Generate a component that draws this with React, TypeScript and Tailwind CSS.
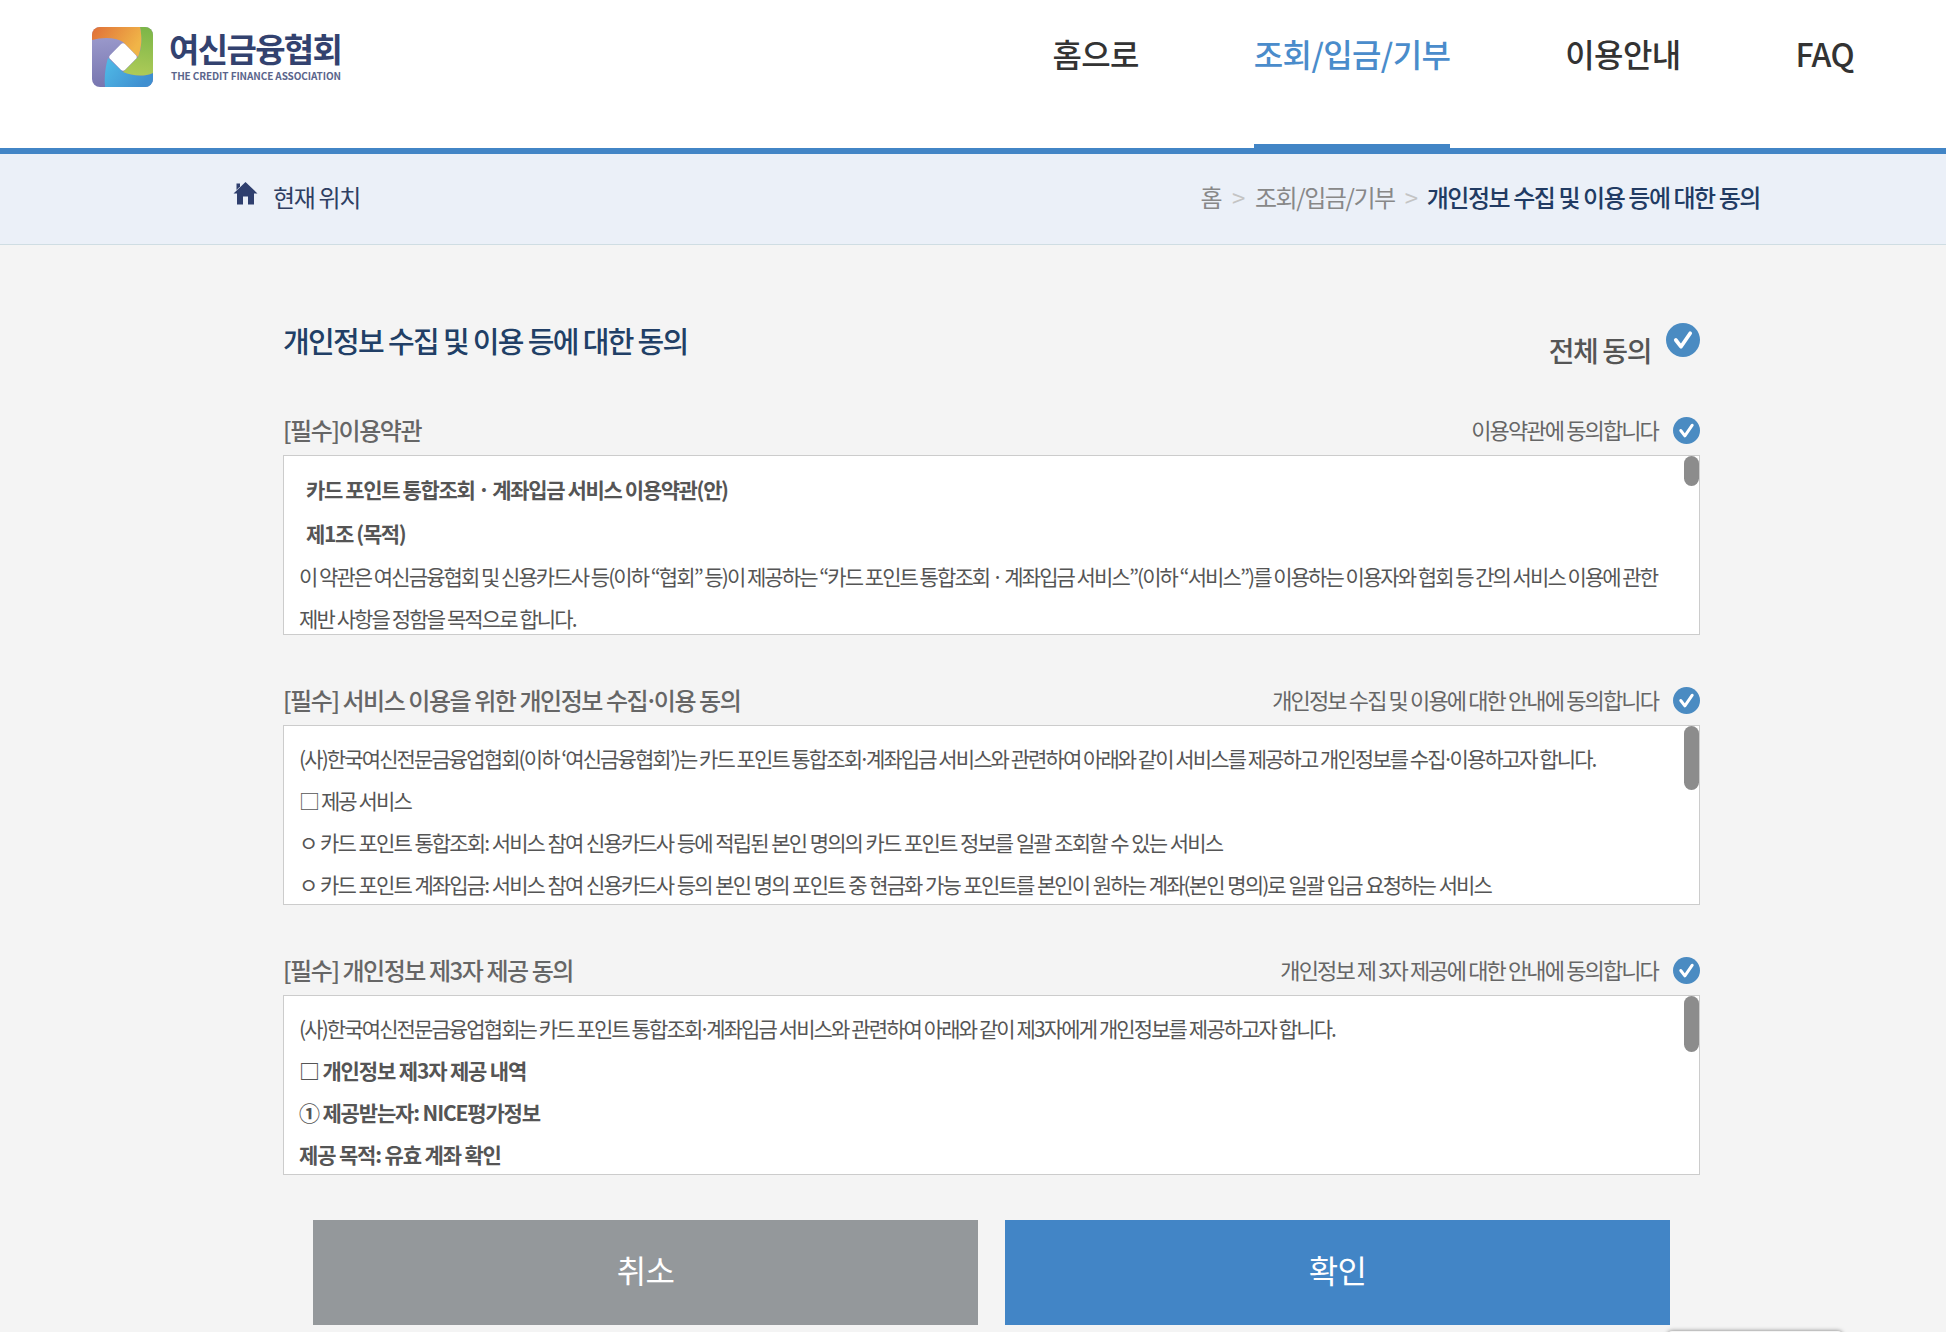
import React from 'react';

const CheckCircle = ({ size, className }: { size: number; className?: string }) => (
  <svg width={size} height={size} viewBox="0 0 33 33" className={'shrink-0 ' + (className ?? '')}>
    <circle cx="16.5" cy="16.5" r="16.5" fill="#4a8bc2" />
    <path d="M9.5 16.5l5 6.5 9-13" fill="none" stroke="#fff" strokeWidth="3.6" strokeLinecap="round" strokeLinejoin="round" />
  </svg>
);

const Logo = () => (
  <svg width="61" height="60" viewBox="0 0 61 60" className="shrink-0">
    <defs>
      <clipPath id="logoClip">
        <rect width="61" height="60" rx="8" />
      </clipPath>
      <linearGradient id="logoOrange" x1="0" y1="0" x2="1" y2="0.4">
        <stop offset="0" stopColor="#e06f38" />
        <stop offset="1" stopColor="#f0b548" />
      </linearGradient>
      <linearGradient id="logoGreen" x1="0.5" y1="0" x2="0.4" y2="1">
        <stop offset="0" stopColor="#7db648" />
        <stop offset="1" stopColor="#aecb58" />
      </linearGradient>
      <linearGradient id="logoBlue" x1="0" y1="0" x2="1" y2="0.5">
        <stop offset="0" stopColor="#50bce8" />
        <stop offset="1" stopColor="#3f8fd0" />
      </linearGradient>
      <linearGradient id="logoPurple" x1="0.4" y1="0" x2="0.5" y2="1">
        <stop offset="0" stopColor="#a09fd0" />
        <stop offset="1" stopColor="#7674ae" />
      </linearGradient>
    </defs>
    <g clipPath="url(#logoClip)">
      <rect width="61" height="60" fill="url(#logoPurple)" />
      <path d="M13 60C12 48 14 38 16 31L31 45C40 49 52 50 61 46V60Z" fill="url(#logoBlue)" />
      <path d="M48 0H61V46C52 50 40 49 31 45L46 30C50 22 50 10 48 0Z" fill="url(#logoGreen)" />
      <path d="M0 13V0H48C50 10 50 20 46 30L31 15C24 10 10 10 0 13Z" fill="url(#logoOrange)" />
      <rect x="20.5" y="19.5" width="21" height="21" rx="3" fill="#fff" transform="rotate(45 31 30)" />
    </g>
  </svg>
);

const HomeIcon = () => (
  <svg width="25" height="24" viewBox="0 0 25 24" className="mb-[7px] shrink-0">
    <path d="M12.5 1L0.5 12.5H4V23.5H10V15.5H15V23.5H21V12.5H24.5Z" fill="#2f3f6e" />
    <path d="M3.5 2.5H7V5.5L3.5 9Z" fill="#2f3f6e" />
  </svg>
);

// a middle dot without spaces is set tight in the reference, the font's own glyph is too wide
const withTightDots = (text: string) =>
  text.split(/(?<! )·(?! )/).map((part, i) => (
    <React.Fragment key={i}>
      {i > 0 && <span className="mx-[-0.12em]">·</span>}
      {part}
    </React.Fragment>
  ));

const NAV_ITEMS = ['홈으로', '조회/입금/기부', '이용안내', 'FAQ'];

interface Line {
  text: string;
  bold?: boolean;
  indent?: boolean;
  spacing?: string;
}

const SECTIONS: { title: string; agree: string; thumb: string; lines: Line[] }[] = [
  {
    title: '[필수]이용약관',
    agree: '이용약관에 동의합니다',
    thumb: 'h-[30px]',
    lines: [
      { text: '카드 포인트 통합조회 · 계좌입금 서비스 이용약관(안)', bold: true, indent: true },
      { text: '제1조 (목적)', bold: true, indent: true },
      { text: '이 약관은 여신금융협회 및 신용카드사 등(이하 “협회” 등)이 제공하는 “카드 포인트 통합조회 · 계좌입금 서비스”(이하 “서비스”)를 이용하는 이용자와 협회 등 간의 서비스 이용에 관한', spacing: '[word-spacing:-0.25px]' },
      { text: '제반 사항을 정함을 목적으로 합니다.' },
    ],
  },
  {
    title: '[필수] 서비스 이용을 위한 개인정보 수집·이용 동의',
    agree: '개인정보 수집 및 이용에 대한 안내에 동의합니다',
    thumb: 'h-[64px]',
    lines: [
      { text: '(사)한국여신전문금융업협회(이하 ‘여신금융협회’)는 카드 포인트 통합조회·계좌입금 서비스와 관련하여 아래와 같이 서비스를 제공하고 개인정보를 수집·이용하고자 합니다.', spacing: '[word-spacing:-0.2px]' },
      { text: '□ 제공 서비스' },
      { text: 'ㅇ 카드 포인트 통합조회: 서비스 참여 신용카드사 등에 적립된 본인 명의의 카드 포인트 정보를 일괄 조회할 수 있는 서비스', spacing: '[word-spacing:0.8px]' },
      { text: 'ㅇ 카드 포인트 계좌입금: 서비스 참여 신용카드사 등의 본인 명의 포인트 중 현금화 가능 포인트를 본인이 원하는 계좌(본인 명의)로 일괄 입금 요청하는 서비스', spacing: '[word-spacing:0.8px]' },
    ],
  },
  {
    title: '[필수] 개인정보 제3자 제공 동의',
    agree: '개인정보 제 3자 제공에 대한 안내에 동의합니다',
    thumb: 'h-[56px]',
    lines: [
      { text: '(사)한국여신전문금융업협회는 카드 포인트 통합조회·계좌입금 서비스와 관련하여 아래와 같이 제3자에게 개인정보를 제공하고자 합니다.' },
      { text: '□ 개인정보 제3자 제공 내역', bold: true },
      { text: '① 제공받는자: NICE평가정보', bold: true },
      { text: '제공 목적: 유효 계좌 확인', bold: true },
    ],
  },
];

const lineClass = (line: Line) => {
  if (line.indent) return 'whitespace-nowrap pl-[7px] text-[21px] font-bold leading-[44px] tracking-[-0.065em] text-[#555555]';
  if (line.bold) return 'whitespace-nowrap text-[21px] font-bold leading-[42px] tracking-[-0.055em] text-[#555555]';
  return 'whitespace-nowrap text-[21px] leading-[42px] tracking-[-0.09em] text-[#555555] ' + (line.spacing ?? '');
};

export default function App() {
  return (
    <div className="relative h-[1332px] overflow-hidden bg-[#f4f4f4] font-['Noto_Sans_CJK_KR','Noto_Sans',sans-serif]">
      {/* Header */}
      <header className="flex h-[154px] justify-between border-b-[6px] border-[#4285c6] bg-white pl-[92px] pr-[92px]">
        <div className="flex items-start gap-4 pt-[27px]">
          <Logo />
          <div className="flex flex-col">
            <span className="text-[33px] font-bold leading-[43px] tracking-[-0.05em] text-[#33426f]">여신금융협회</span>
            <span className="ml-[2px] whitespace-nowrap text-[10px] font-bold leading-[12px] tracking-[-0.01em] text-[#5a658c]">THE CREDIT FINANCE ASSOCIATION</span>
          </div>
        </div>
        <nav className="flex gap-[115px]">
          {NAV_ITEMS.map((item, i) => (
            <a
              key={item}
              className={
                i === 1
                  ? 'h-[148px] border-b-4 border-[#4285c6] pt-[30px] text-[32px] font-medium leading-[46px] tracking-[-0.02em] text-[#4a8ccb]'
                  : 'h-[148px] pt-[30px] text-[32px] font-medium leading-[46px] tracking-[-0.02em] text-[#333333]'
              }
            >
              {item}
            </a>
          ))}
        </nav>
      </header>

      {/* Breadcrumb */}
      <div className="flex h-[91px] items-center justify-between border-b border-[#cfdde3] bg-[#ebf0f8] pb-[5px] pl-[233px] pr-[186px]">
        <div className="flex items-center gap-[15px]">
          <HomeIcon />
          <span className="text-[24px] leading-[36px] tracking-[-0.055em] text-[#2f3f63]">현재 위치</span>
        </div>
        <div className="flex items-center text-[24px] leading-[36px] tracking-[-0.06em]">
          <span className="text-[#888888]">홈</span>
          <span className="mx-[11px] text-[#c4c4c4]">&gt;</span>
          <span className="text-[#888888]">조회/입금/기부</span>
          <span className="mx-[10px] text-[#c4c4c4]">&gt;</span>
          <span className="font-medium text-[#213b63]">개인정보 수집 및 이용 등에 대한 동의</span>
        </div>
      </div>

      {/* Content */}
      <main className="ml-[283px] w-[1417px] pt-[70px]">
        <div className="flex h-[50px] items-start justify-between">
          <h1 className="text-[29px] font-medium leading-[50px] tracking-[-0.057em] text-[#213f66]">개인정보 수집 및 이용 등에 대한 동의</h1>
          <div className="flex items-start gap-[15px]">
            <span className="mt-[15px] text-[28px] font-medium leading-[40px] tracking-[-0.05em] text-[#555555]">전체 동의</span>
            <CheckCircle size={34} className="mt-[8px]" />
          </div>
        </div>

        {SECTIONS.map((section) => (
          <section key={section.title} className="mt-[45px]">
            <div className="mb-[5px] flex h-[40px] items-center justify-between">
              <h2 className="text-[24px] font-medium leading-[40px] tracking-[-0.06em] text-[#666666]">{withTightDots(section.title)}</h2>
              <div className="flex items-center gap-[15px]">
                <span className="pb-[2px] text-[22px] leading-[38px] tracking-[-0.085em] text-[#666666]">{section.agree}</span>
                <CheckCircle size={27} />
              </div>
            </div>
            <div className="relative h-[180px] overflow-hidden border border-[#cccccc] bg-white pl-[15px] pt-[11px]">
              {section.lines.map((line) => (
                <p key={line.text} className={lineClass(line)}>
                  {withTightDots(line.text)}
                </p>
              ))}
              {/* scrollbar thumb */}
              <div className={'absolute right-0 top-0 w-[15px] rounded-lg bg-[#8c8c8c] ' + section.thumb} />
            </div>
          </section>
        ))}

        {/* Buttons */}
        <div className="mt-[45px] flex justify-center gap-[27px]">
          <button className="h-[105px] w-[665px] bg-[#94989b] pb-[8px] text-[32px] leading-[46px] tracking-[-0.02em] text-white">취소</button>
          <button className="h-[105px] w-[665px] bg-[#4285c6] pb-[8px] text-[32px] leading-[46px] tracking-[-0.02em] text-white">확인</button>
        </div>
      </main>

      {/* popup edge peeking in at the bottom */}
      <div className="absolute left-[1668px] top-[1331px] h-10 w-[174px] rounded-t bg-[#f4f4f4] shadow-[0_0_4px_rgba(0,0,0,0.5)]" />
    </div>
  );
}
